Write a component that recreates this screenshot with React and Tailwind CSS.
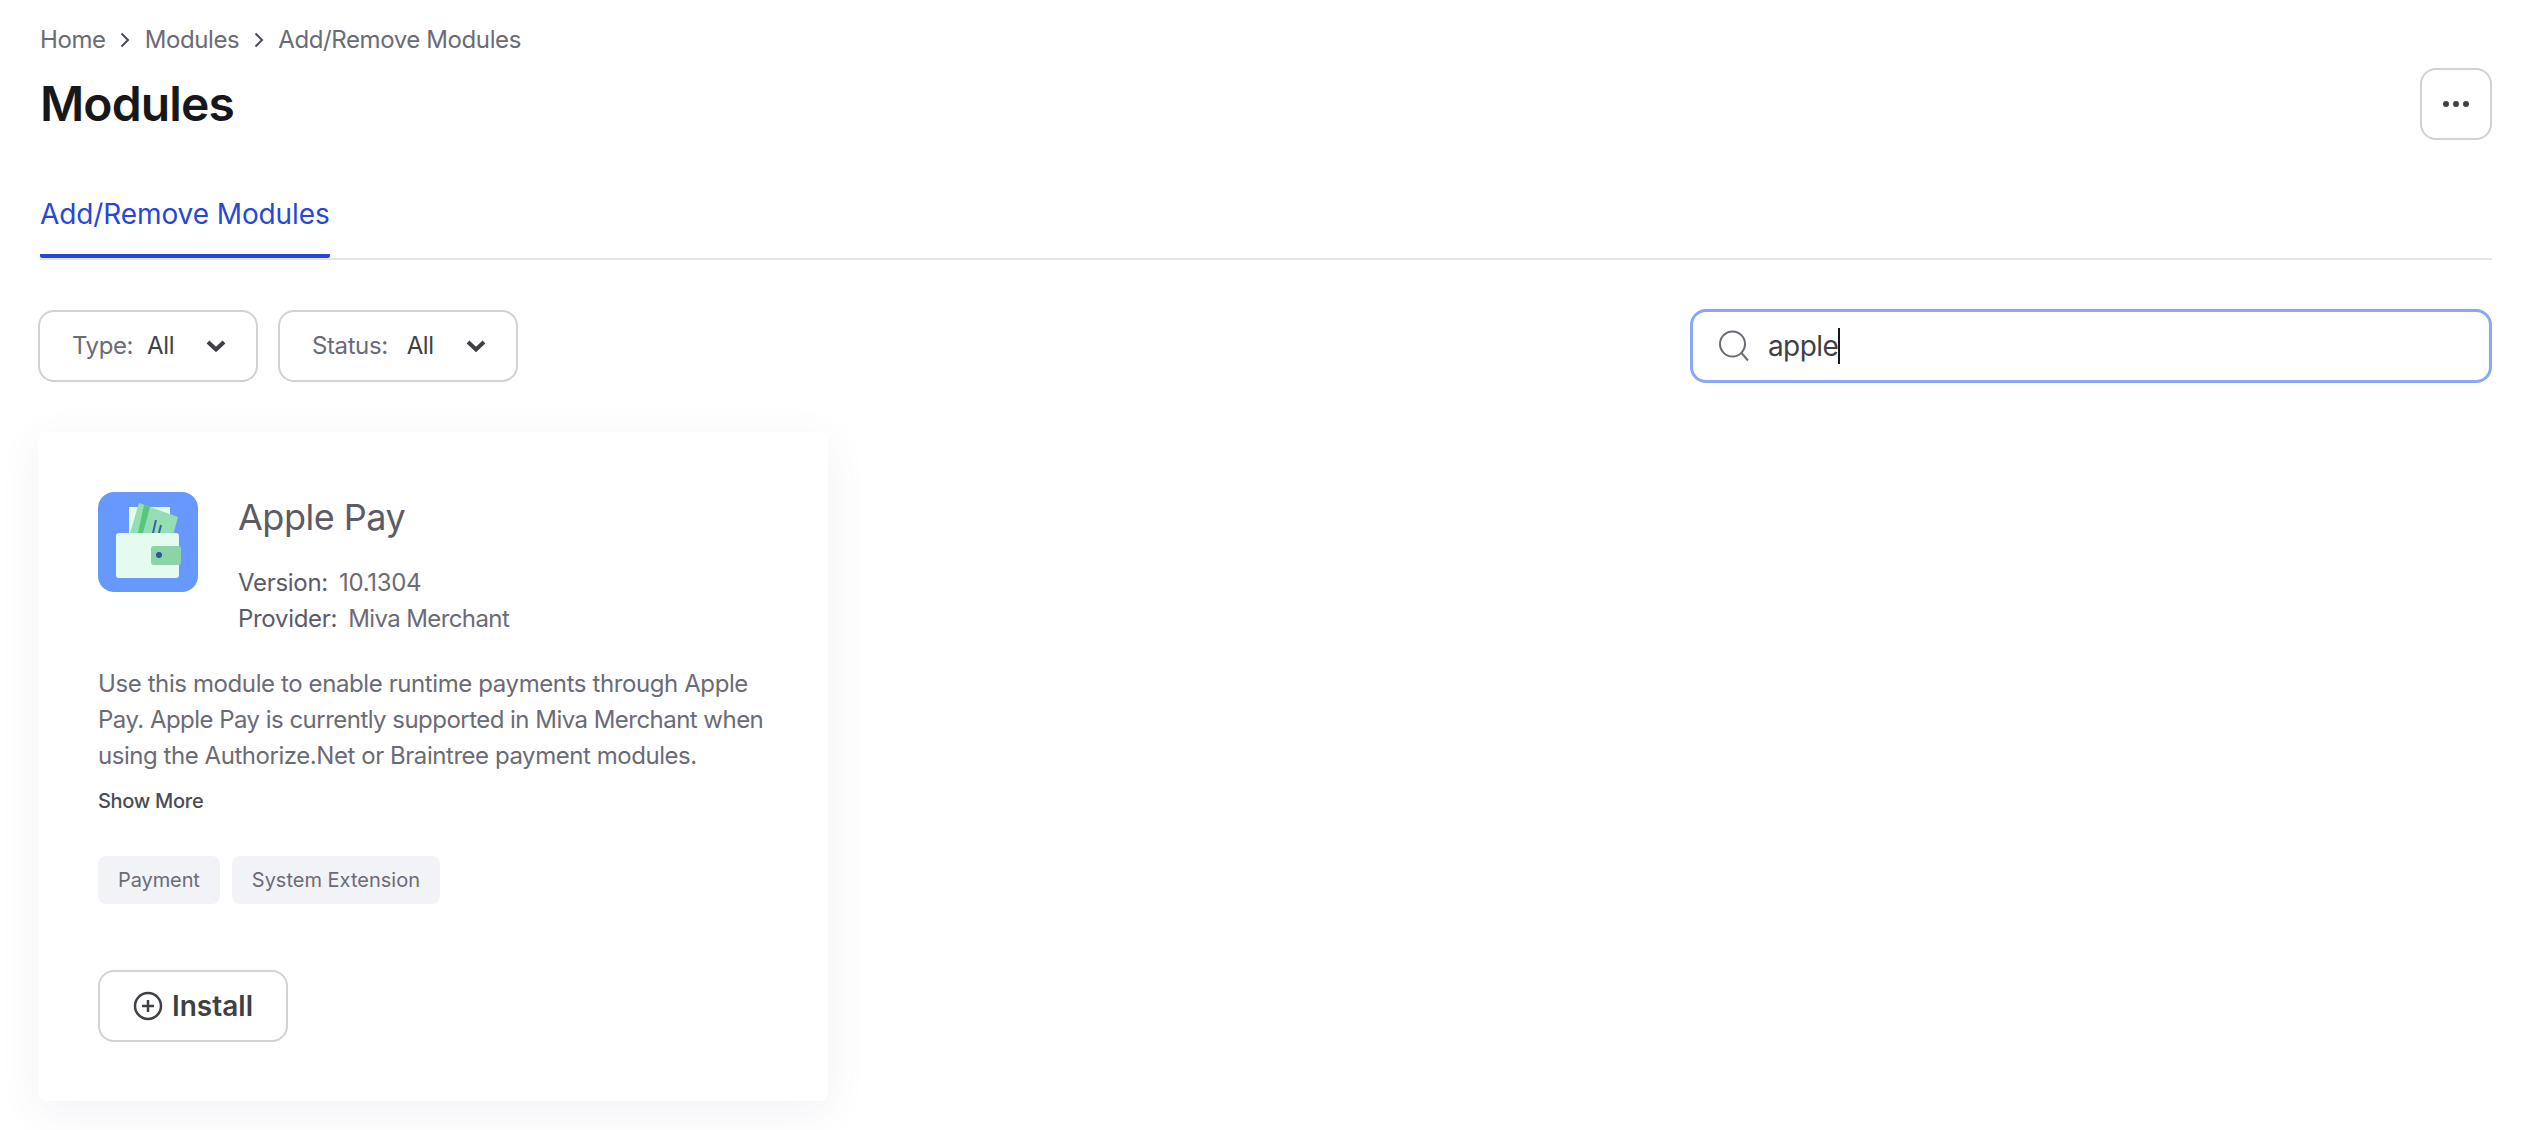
import React from "react";

const Sep = () => (
  <svg width="14" height="18" viewBox="0 0 14 18" fill="none" className="mx-[12.5px]">
    <path d="M3.5 2.5 L10 9 L3.5 15.5" stroke="#4b4b55" strokeWidth="2" />
  </svg>
);

const Chevron = () => (
  <svg width="20" height="12" viewBox="0 0 20 12" fill="none">
    <path d="M2 2 L10 9.5 L18 2" stroke="#3f3f46" strokeWidth="4" />
  </svg>
);

const Filter = ({ label, width, gap }) => (
  <button className={`flex h-[72px] items-center justify-between rounded-[16px] border-2 border-[#d1d1d6] pl-[32px] pr-[30px] ${width}`}>
    <span className={`flex items-center text-[24px] leading-[32px] tracking-[-0.4px] ${gap}`}>
      <span className="text-[#6b6b76]">{label}</span>
      <span className="text-[#3f3f46]">All</span>
    </span>
    <Chevron />
  </button>
);

const Wallet = () => (
  <svg width="100" height="100" viewBox="0 0 100 100" className="rounded-[16px] shrink-0">
    <rect width="100" height="100" fill="#6699fb" />
    <rect x="31" y="15" width="41" height="28" fill="#e6fbef" />
    <polygon points="41,11 80,25 75,43 32,41" fill="#93dfb3" />
    <polygon points="46,13 52,15 45,41 40,41" fill="#58c47c" />
    <path d="M58 28 L55 41 M63 33 L61 41" stroke="#3f5fa8" strokeWidth="2" />
    <rect x="18" y="41" width="63" height="45" rx="3" fill="#e6fbef" />
    <rect x="53" y="54" width="30" height="19" rx="3" fill="#8ad4a8" />
    <circle cx="61" cy="63" r="3" fill="#2f5597" />
  </svg>
);

export default function App() {
  return (
    <div className="min-h-[1130px] bg-white pl-[30px] pr-[30px] pt-[24px] font-['Inter','Liberation_Sans',sans-serif]">
      <div className="pl-[10px]">
        <nav className="flex h-[32px] items-center text-[24px] leading-[32px] tracking-[-0.4px] text-[#6b6b76]">
          <span>Home</span>
          <Sep />
          <span>Modules</span>
          <Sep />
          <span>Add/Remove Modules</span>
        </nav>
        <div className="mt-[12px] flex h-[71px] items-center justify-between">
          <h1 className="text-[48px] leading-[56px] font-semibold tracking-[-0.9px] text-[#18181b]">Modules</h1>
          <button className="flex h-[72px] w-[72px] items-center justify-center gap-[4px] rounded-[16px] border-2 border-[#d1d1d6]">
            <span className="h-[6px] w-[6px] rounded-full bg-[#3f3f46]" />
            <span className="h-[6px] w-[6px] rounded-full bg-[#3f3f46]" />
            <span className="h-[6px] w-[6px] rounded-full bg-[#3f3f46]" />
          </button>
        </div>
        <div className="mt-[55px] border-b-2 border-[#e4e4e7]">
          <div className="w-fit border-b-4 border-[#2747d8] rounded-b-[2px] pb-[20px] text-[28px] leading-[40px] tracking-[-0.1px] text-[#2747d8]">
            Add/Remove Modules
          </div>
        </div>
      </div>

      <div className="mt-[49px] flex items-center justify-between pl-[8px]">
        <div className="flex gap-[20px]">
          <Filter label="Type:" width="w-[220px]" gap="gap-[14px]" />
          <Filter label="Status:" width="w-[240px]" gap="gap-[19px]" />
        </div>
        <div className="flex h-[74px] w-[802px] items-center rounded-[16px] border-[3px] border-[#8aa6f8] pl-[25px]">
          <svg width="32" height="32" viewBox="0 0 32 32" fill="none" className="shrink-0">
            <circle cx="14.5" cy="14" r="12.5" stroke="#6b6b76" strokeWidth="2" />
            <path d="M23.5 23 L30 30.5" stroke="#6b6b76" strokeWidth="2" />
          </svg>
          <span className="ml-[18px] flex items-center text-[28px] leading-[36px] tracking-[-0.6px] text-[#3f3f46]">
            apple
            <span className="h-[36px] w-[2px] bg-[#18181b]" />
          </span>
        </div>
      </div>

      <div className="mt-[49px] ml-[8px] w-[790px] rounded-[8px] bg-white px-[60px] pt-[60px] pb-[59px] shadow-[0_10px_40px_rgba(80,90,140,0.08)]">
        <div className="flex gap-[40px]">
          <Wallet />
          <div className="-mt-[1px]">
            <div className="text-[36px] leading-[52px] tracking-[-0.5px] text-[#5b5b66]">Apple Pay</div>
            <div className="mt-[22px] flex gap-[11px] text-[24px] leading-[36px] tracking-[-0.3px] text-[#5b5b66]">
              <span>Version:</span>
              <span className="text-[#6b6b76]">10.1304</span>
            </div>
            <div className="flex gap-[11px] text-[24px] leading-[36px] tracking-[-0.3px] text-[#5b5b66]">
              <span>Provider:</span>
              <span className="tracking-[-0.6px] text-[#6b6b76]">Miva Merchant</span>
            </div>
          </div>
        </div>
        <p className="mt-[29px] text-[24px] leading-[36px] text-[#6b6b76] whitespace-nowrap">
          <span className="block tracking-[-0.4px]">Use this module to enable runtime payments through Apple</span>
          <span className="block tracking-[-0.53px]">Pay. Apple Pay is currently supported in Miva Merchant when</span>
          <span className="block tracking-[-0.45px]">using the Authorize.Net or Braintree payment modules.</span>
        </p>
        <div className="mt-[13px] text-[20px] leading-[28px] font-medium tracking-[-0.3px] text-[#4b4b55]">Show More</div>
        <div className="mt-[41px] flex gap-[12px]">
          <span className="flex h-[48px] items-center rounded-[8px] bg-[#f2f3f7] px-[20px] text-[20px] tracking-[-0.1px] text-[#6b6b76]">Payment</span>
          <span className="flex h-[48px] items-center rounded-[8px] bg-[#f2f3f7] px-[20px] text-[20px] text-[#6b6b76]">System Extension</span>
        </div>
        <button className="mt-[66px] flex h-[72px] w-[190px] items-center justify-center gap-[9px] rounded-[16px] border-2 border-[#d1d1d6] text-[28px] font-semibold text-[#3f3f46]">
          <svg width="30" height="30" viewBox="0 0 30 30" fill="none">
            <circle cx="15" cy="15" r="13" stroke="#3f3f46" strokeWidth="2.5" />
            <path d="M15 9 V21 M9 15 H21" stroke="#3f3f46" strokeWidth="2.5" />
          </svg>
          Install
        </button>
      </div>
    </div>
  );
}
